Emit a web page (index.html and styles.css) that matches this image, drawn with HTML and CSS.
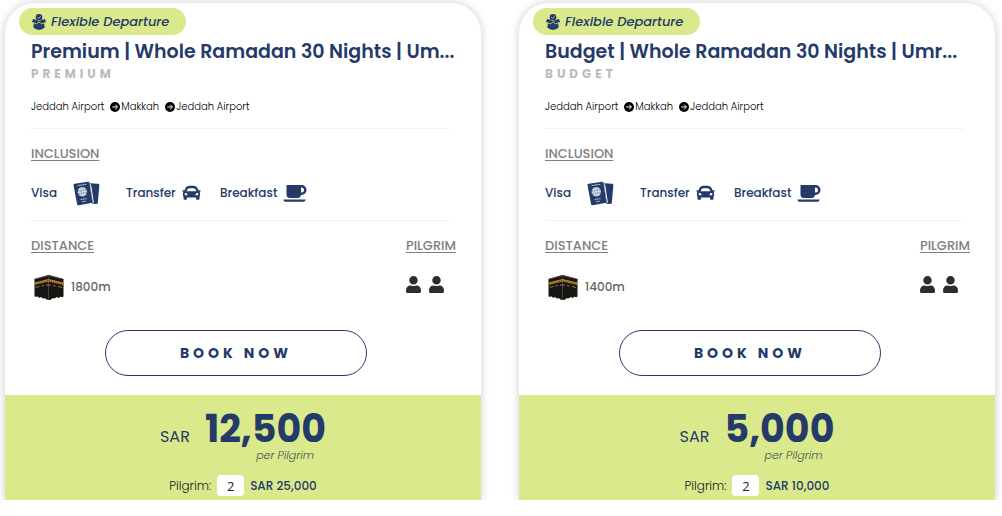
FILE: index.html
```html
<!DOCTYPE html>
<html lang="en">
<head>
<meta charset="utf-8">
<title>Umrah packages</title>
<link rel="stylesheet" href="styles.css">
</head>
<body>
<svg class="sprite" aria-hidden="true">
  <symbol id="flexible" viewBox="0 0 14 16">
    <circle cx="7" cy="3.300" r="3.300"/>
    <path class="line-light" d="M5.400 3.300l1.200 1.200 2-2.200"/>
    <path d="M1 5l3 .8L7 7.200l3-1.400L13 5l1 3-2 1.200.8 4Q10.500 16 7 16t-5.800-2.800l.8-4L0 8z"/>
    <path class="line-light" d="M.8 8.600l3.800 1.200L7 7.800l2.400 2 3.800-1.200"/>
  </symbol>
  <symbol id="arrow" viewBox="0 0 10 10">
    <circle cx="5" cy="5" r="5"/>
    <path class="line-white" d="M2.300 5h5M5.200 2.700L7.500 5 5.200 7.300"/>
  </symbol>
  <symbol id="passport" viewBox="0 0 27 25">
    <path d="M17 2.200l8.200.6q1.200.2 1.200 1.500l-1.600 17.500q-.2 1.400-1.500 1.300l-4-.3z"/>
    <path d="M1.600 2.800L15 .7q1.300-.2 1.500 1l2.700 18.900q.2 1.300-1.100 1.500L5.600 24.300q-1.300.2-1.500-1.100L.5 4.300Q.3 3 1.600 2.800z"/>
    <path class="line-white" d="M17.600 3.500l2.800 18.200"/>
    <path class="globe-lines" d="M4.500 4.600l8.800-1.300M7.500 18.500l6.200-.9M9 20.700l3.800-.5"/>
    <circle class="globe" cx="9.300" cy="10.800" r="4.800"/>
    <path class="globe-lines" d="M4.700 11.500l9.400-1.400M5.400 8.500l7-1M6.200 14.200l7-1M8.600 6l1.500 9.600M7 6.800q-1.500 4.500 1.500 8.400M10.700 6.200q2.500 3.500.8 8.500"/>
  </symbol>
  <symbol id="car" viewBox="0 0 512 448">
    <path d="M499.990 144h-50.290l-14.200-35.520C414.830 56.820 365.540 24 309.900 24H202.100c-55.640 0-104.930 32.820-125.600 84.480L62.300 144H12c-8 0-14 7-12 15l6 24c1 5 6 9 12 9h20c-14 12-22 29-22 48v48c0 16 6 31 16 42v54c0 18 14 32 32 32h32c18 0 32-14 32-32v-32h256v32c0 18 14 32 32 32h32c18 0 32-14 32-32v-54c10-11 16-26 16-42v-48c0-19-9-36-22-48h20c6 0 11-4 12-9l6-24c2-8-4-15-12-15zM136 132c10-26 36-44 66-44h108c30 0 56 18 66 44l16 44H120zM96 288c-19 0-32-13-32-32s13-32 32-32 48 29 48 48-29 16-48 16zm320 0c-19 0-48 3-48-16s29-48 48-48 32 13 32 32-13 32-32 32z"/>
  </symbol>
  <symbol id="cup" viewBox="0 0 24 17">
    <path d="M4 0h14.500a5 5 0 0 1 0 10H18a3.500 3.500 0 0 1-3.500 3H7a3.500 3.500 0 0 1-3.500-3.500V.5zM18 2.500v5h.5a2.500 2.500 0 0 0 0-5z" fill-rule="evenodd"/>
    <path d="M.3 14.500h22.400q-.4 2.200-2.200 2.200H2.500Q.7 16.700.3 14.500z"/>
  </symbol>
  <symbol id="person" viewBox="0 0 448 512">
    <path d="M224 256a128 128 0 1 0 0-256 128 128 0 0 0 0 256zm90 32h-17a174 174 0 0 1-146 0h-17C60 288 0 348 0 422v42c0 27 21 48 48 48h352c27 0 48-21 48-48v-42c0-74-60-134-134-134z"/>
  </symbol>
  <symbol id="kaaba" viewBox="0 0 30 25">
    <path class="k-wall" d="M.5 4L14.500 0l15 4v17.500q-1.500 1.500-3 0-1.500 2.500-4 .6-1.800 2.200-4 .8-1.500 2.600-4 1.800-2.400.4-3.500-1.800-2.400 1.500-4-.8-2.500 1.500-3.500-.8-1.800 1-3 0z"/>
    <path class="k-top" d="M.5 4L14.500 0l15 4v.8L14.500 1.200.5 4.800z"/>
    <path class="k-gold" d="M.5 7.500l14-3.600v2.600L.5 9.900zM29.500 7.500l-15-3.600v2.600l15 3.400z"/>
    <path class="k-pattern" d="M1.500 8.700l13-3.200 14 3.200"/>
    <path class="k-detail" d="M1.500 12.400l4-.9M7.500 11l2.500-.5M12 10l5 0M19 10.500l2.500.5M24 11.500l4 .9"/>
    <path class="k-edge" d="M14.500 2v21.500"/>
  </symbol>
</svg>

<main class="packages">
  <article class="card">
    <p class="badge"><svg class="i-flexible"><use href="#flexible"/></svg>Flexible Departure</p>
    <div class="body">
      <h2 class="title">Premium | Whole Ramadan 30 Nights | Um...</h2>
      <p class="tier">PREMIUM</p>
      <p class="route"><span>Jeddah Airport</span><span class="stop"><svg class="i-arrow"><use href="#arrow"/></svg>Makkah</span><span class="stop"><svg class="i-arrow"><use href="#arrow"/></svg>Jeddah Airport</span></p>
      <hr class="rule">
      <h3 class="label">INCLUSION</h3>
      <ul class="inclusions">
        <li><span class="visa">Visa</span><svg class="i-passport"><use href="#passport"/></svg></li>
        <li>Transfer<svg class="i-car"><use href="#car"/></svg></li>
        <li>Breakfast<svg class="i-cup"><use href="#cup"/></svg></li>
      </ul>
      <hr class="rule">
      <div class="facts">
        <div>
          <h3 class="label">DISTANCE</h3>
          <p class="fact"><svg class="i-kaaba"><use href="#kaaba"/></svg>1800m</p>
        </div>
        <div>
          <h3 class="label">PILGRIM</h3>
          <p class="fact people"><svg class="i-person"><use href="#person"/></svg><svg class="i-person"><use href="#person"/></svg></p>
        </div>
      </div>
      <div class="action"><button class="book" type="button">BOOK NOW</button></div>
    </div>
    <div class="price">
      <div class="amount"><p class="sum"><span class="currency">SAR</span><strong class="number">12,500</strong></p><p class="per">per Pilgrim</p></div>
      <div class="total"><label for="pilgrims-1">Pilgrim:</label><input class="count" id="pilgrims-1" type="text" inputmode="numeric" value="2"><strong class="total-sum">SAR 25,000</strong></div>
    </div>
  </article>

  <article class="card">
    <p class="badge"><svg class="i-flexible"><use href="#flexible"/></svg>Flexible Departure</p>
    <div class="body">
      <h2 class="title">Budget | Whole Ramadan 30 Nights | Umr...</h2>
      <p class="tier">BUDGET</p>
      <p class="route"><span>Jeddah Airport</span><span class="stop"><svg class="i-arrow"><use href="#arrow"/></svg>Makkah</span><span class="stop"><svg class="i-arrow"><use href="#arrow"/></svg>Jeddah Airport</span></p>
      <hr class="rule">
      <h3 class="label">INCLUSION</h3>
      <ul class="inclusions">
        <li><span class="visa">Visa</span><svg class="i-passport"><use href="#passport"/></svg></li>
        <li>Transfer<svg class="i-car"><use href="#car"/></svg></li>
        <li>Breakfast<svg class="i-cup"><use href="#cup"/></svg></li>
      </ul>
      <hr class="rule">
      <div class="facts">
        <div>
          <h3 class="label">DISTANCE</h3>
          <p class="fact"><svg class="i-kaaba"><use href="#kaaba"/></svg>1400m</p>
        </div>
        <div>
          <h3 class="label">PILGRIM</h3>
          <p class="fact people"><svg class="i-person"><use href="#person"/></svg><svg class="i-person"><use href="#person"/></svg></p>
        </div>
      </div>
      <div class="action"><button class="book" type="button">BOOK NOW</button></div>
    </div>
    <div class="price">
      <div class="amount"><p class="sum"><span class="currency">SAR</span><strong class="number">5,000</strong></p><p class="per">per Pilgrim</p></div>
      <div class="total"><label for="pilgrims-2">Pilgrim:</label><input class="count" id="pilgrims-2" type="text" inputmode="numeric" value="2"><strong class="total-sum">SAR 10,000</strong></div>
    </div>
  </article>
</main>
</body>
</html>
```
FILE: styles.css
```css
* { box-sizing: border-box; margin: 0; padding: 0; }
:root { --navy: #243a69; --lime: #dae98b; --grey: #808080; }
body { background: #fff; font-family: Poppins, Inter, sans-serif; font-size: 12px; color: #222; }
.sprite { display: none; }
svg { flex: none; fill: currentColor; }

.packages { display: grid; grid-template-columns: 1fr 1fr; gap: 38px; padding: 3px 7px 0 5px; overflow: hidden; }
.card { min-width: 0; border-radius: 30px 30px 0 0; background: #fff; box-shadow: 0 0 10px rgba(0, 0, 0, .2); }

.badge { display: inline-flex; align-items: center; gap: 5px; height: 27px; margin: 5px 0 0 14px; padding: 0 17px 0 13px; border-radius: 14px; background: var(--lime); color: var(--navy); font-size: 13px; font-weight: 500; font-style: italic; vertical-align: top; }
.i-flexible { width: 14px; height: 16px; }
.line-light { fill: none; stroke: #dae98b; stroke-width: .8; }
.line-white { fill: none; stroke: #fff; stroke-width: 1; }

.body { padding: 4px 25px 19px 26px; }
.title { color: var(--navy); font-size: 19px; font-weight: 600; line-height: 26px; white-space: nowrap; }
.tier { color: #bbb; font-size: 12px; font-weight: 700; line-height: 18px; letter-spacing: 4px; }
.route { display: flex; gap: 6px; margin-top: 15px; font-size: 10px; font-weight: 300; line-height: 18px; color: #000; }
.stop { display: flex; align-items: center; gap: 1px; }
.i-arrow { width: 10px; height: 10px; color: #000; }
.rule { height: 1px; margin: 12px 6px 15px 0; border: 0; background: #f3f3f3; }
.label { color: var(--grey); font-size: 13px; font-weight: 500; line-height: 20px; text-decoration: underline; text-underline-offset: 2px; }

.inclusions { display: grid; grid-template-columns: 95px 94px auto; margin-top: 14px; list-style: none; color: var(--navy); font-weight: 500; }
.inclusions li { display: flex; align-items: center; gap: 6px; height: 30px; }
.visa { width: 36px; }
.i-passport { width: 27px; height: 25px; }
.i-car { width: 19px; height: 16px; }
.i-cup { width: 24px; height: 17px; }
.globe { fill: #8c99b3; }
.globe-lines { fill: none; stroke: #fff; stroke-width: .6; }

.facts { display: flex; justify-content: space-between; }
.fact { display: flex; align-items: center; gap: 7px; height: 30px; margin-top: 16px; padding-left: 3px; color: #666; font-size: 12px; font-weight: 500; }
.people { gap: 8px; padding: 0 0 5px; color: #2d2d2d; }
.i-kaaba { width: 30px; height: 25px; }
.i-person { width: 15px; height: 17px; }
.k-wall { fill: #171612; }
.k-top { fill: #45423a; }
.k-gold { fill: #b98439; }
.k-pattern { fill: none; stroke: #4a3414; stroke-width: .8; stroke-dasharray: 1 1; }
.k-detail { fill: none; stroke: #a07432; stroke-width: 1; }
.k-edge { fill: none; stroke: #8a8578; stroke-width: .4; }

.action { display: flex; justify-content: center; margin-top: 28px; padding-right: 15px; }
.book { width: 64%; height: 46px; border: 1px solid var(--navy); border-radius: 23px; background: #fff; color: var(--navy); font: inherit; font-size: 14px; font-weight: 700; letter-spacing: 4px; }

.price { display: flex; flex-direction: column; align-items: center; padding: 14px 0 4px; background: var(--lime); color: var(--navy); }
.sum { display: flex; align-items: baseline; gap: 15px; }
.currency { font-size: 16px; line-height: 20px; }
.number { font-size: 38px; font-weight: 700; line-height: 40px; }
.per { padding-right: 12px; color: #415457; font-size: 11px; font-weight: 300; font-style: italic; line-height: 12px; text-align: right; }
.total { display: flex; align-items: center; gap: 6px; margin-top: 14px; color: #222; font-weight: 300; }
.count { width: 27px; height: 21px; border: 0; border-radius: 4px; background: #fff; color: #222; font-family: "Open Sans", sans-serif; font-size: 13px; text-align: center; }
.total-sum { color: var(--navy); font-size: 12px; font-weight: 500; }
```
